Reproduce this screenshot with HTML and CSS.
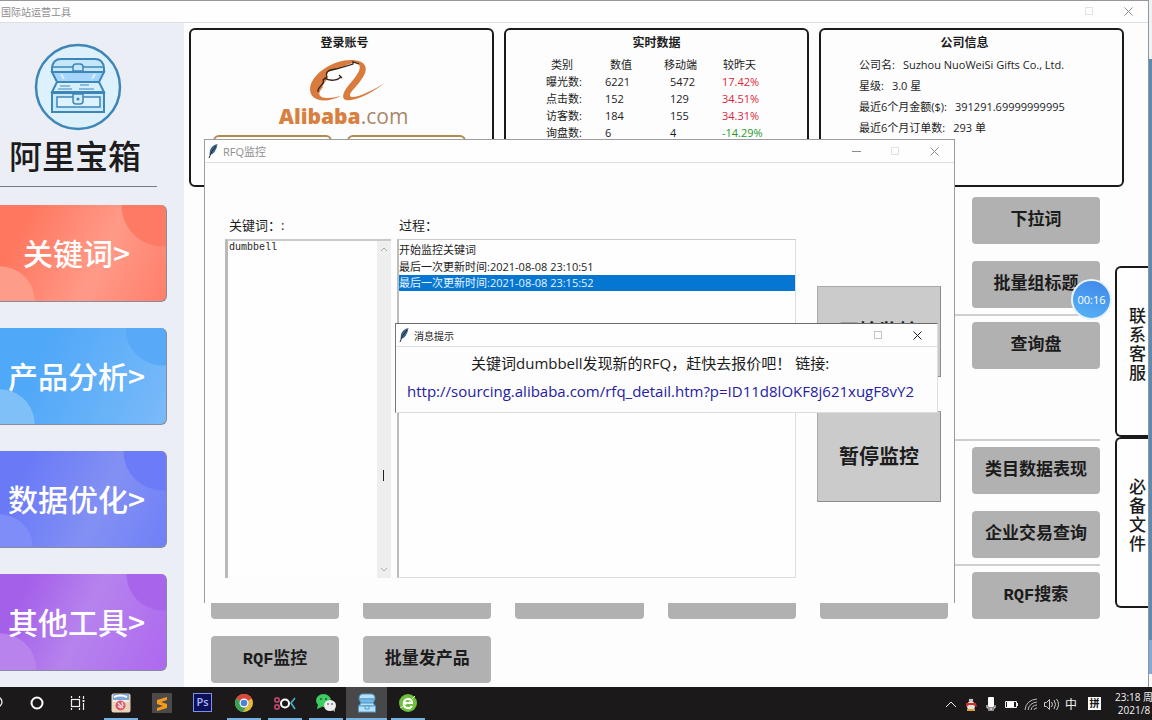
FILE: index.html
```html
<!DOCTYPE html>
<html lang="zh-CN">
<head>
<meta charset="utf-8">
<title>国际站运营工具</title>
<link rel="stylesheet" href="styles.css">
</head>
<body>
<div class="desktop">
  <div class="workspace">
    <main class="app">
      <header class="titlebar app-titlebar">
        <span class="titlebar-text">国际站运营工具</span>
        <span class="controls">
          <button class="ctl faint" aria-label="□"><svg width="9" height="9"><rect x=".5" y=".5" width="7" height="7"/></svg></button>
          <button class="ctl" aria-label="×"><svg width="9" height="9"><path d="M.5 .5l8 8M8.5 .5l-8 8"/></svg></button>
        </span>
      </header>
      <div class="app-body">
        <nav class="sidebar">
          <svg class="logo" width="88" height="88" viewBox="0 0 88 88" fill="none" stroke="#3f86b8" stroke-width="2">
            <circle cx="44" cy="44" r="42" fill="#ddf1fd" stroke-width="2.500"/>
            <path d="M18 25q1-9 9-9h34q8 0 9 9v4H18z" fill="#c4e7fb"/>
            <path d="M18 24h21M49 24h21" stroke-width="1.5"/>
            <path d="M18 29h52l-5 10H23z" fill="#a5d5fa"/>
            <path d="M27 31l3 5M61 31l-3 5" stroke="#d9effd"/>
            <path d="M23 39h42l5 10H18z" fill="#d5effc"/>
            <path d="M26 43h10M46 42h9M24 46h14M45 46h15" stroke-width="1"/>
            <rect x="18" y="50" width="52" height="19" fill="#c9eafb"/>
            <rect x="23" y="54" width="43" height="10" stroke-width="1.5" fill="#ddf3fd"/>
            <path d="M39 51h10v7q0 3-3 3h-4q-3 0-3-3z" fill="#d3edfb" stroke-width="1.5"/>
            <path d="M39 28v-4q0-3 3-3h4q3 0 3 3v4z" fill="#c4e7fb" stroke-width="1.5"/>
            <circle cx="44" cy="56" r="1.500" fill="#3f86b8" stroke="none"/>
          </svg>
          <h1 class="brand">阿里宝箱</h1>
          <div class="menu">
            <button class="menu-item coral">关键词&gt;</button>
            <button class="menu-item sky">产品分析&gt;</button>
            <button class="menu-item indigo">数据优化&gt;</button>
            <button class="menu-item violet">其他工具&gt;</button>
          </div>
        </nav>
        <div class="content">
          <div class="cards">
            <section class="card account">
              <h2>登录账号</h2>
              <svg class="swoosh" width="78" height="44" viewBox="0 0 78 44">
                <path d="M32 38C16 46 1 43 1 31 2 15 26 1 44 2c14 1 15 9 10 17-5 9-14 15-13 19 2 3 13 0 35-13C56 40 43 43 37 42c-5-1-3-8 2-14 8-9 14-17 11-21-4-6-14 2-31 7l-2 5 2 1-6 8 1 1C4 40 16 42 32 38z" fill="#d87b3c"/>
                <path d="M9 34c-1-6 8-7 5-12l4-3c-2-5 1-7 9-8l17-5v-2l6 2" fill="none" stroke="#33221a" stroke-width="1.3"/>
                <path d="M15 20c7 4 14 2 17-1M30 17l3 3" fill="none" stroke="#33221a" stroke-width="1.3"/>
              </svg>
              <div class="wordmark"><b>Alibaba</b><span>.com</span></div>
              <div class="account-slots"><div></div><div></div></div>
            </section>
            <section class="card">
              <h2>实时数据</h2>
              <table class="stats">
                <thead><tr><th>类别</th><th>数值</th><th>移动端</th><th>较昨天</th></tr></thead>
                <tbody>
                  <tr><td>曝光数:</td><td>6221</td><td class="shift">5472</td><td class="up">17.42%</td></tr>
                  <tr><td>点击数:</td><td>152</td><td class="shift">129</td><td class="up">34.51%</td></tr>
                  <tr><td>访客数:</td><td>184</td><td class="shift">155</td><td class="up">34.31%</td></tr>
                  <tr><td>询盘数:</td><td>6</td><td class="shift">4</td><td class="down">-14.29%</td></tr>
                </tbody>
              </table>
            </section>
            <section class="card company">
              <h2>公司信息</h2>
              <dl class="info">
                <div><dt>公司名:</dt><dd>Suzhou NuoWeiSi Gifts Co., Ltd.</dd></div>
                <div><dt>星级:</dt><dd>3.0 星</dd></div>
                <div><dt>最近6个月金额($):</dt><dd>391291.69999999995</dd></div>
                <div><dt>最近6个月订单数:</dt><dd>293 单</dd></div>
              </dl>
            </section>
          </div>
          <div class="lower">
            <div class="tools">
              <div class="tool-group">
                <button class="tool last">下拉词</button>
                <button class="tool last">批量组标题</button>
              </div>
              <div class="tool-group two-rows">
                <button class="tool last">查询盘</button>
              </div>
              <div class="tool-group">
                <button class="tool last">类目数据表现</button>
                <button class="tool last">企业交易查询</button>
              </div>
              <div class="tool-group">
                <div class="tool"></div><div class="tool"></div><div class="tool"></div><div class="tool"></div><div class="tool"></div>
                <button class="tool">RQF搜索</button>
                <button class="tool">RQF监控</button>
                <button class="tool">批量发产品</button>
              </div>
            </div>
            <div class="side-tabs">
              <button class="side-tab">联系客服</button>
              <button class="side-tab">必备文件</button>
            </div>
          </div>
        </div>
      </div>
    </main>
    <div class="backdrop"><div class="b-top"></div><div class="b-blue"></div><div class="b-pale"></div><div class="b-end"></div></div>

    <section class="window rfq">
      <header class="titlebar">
        <svg class="feather" width="11" height="14" viewBox="0 0 11 14"><path d="M9.500 0Q4 1 2 6l-.5 5Q8 10 9.500 0z" fill="#3f6488"/><path d="M1 14Q3 7 8 2" stroke="#1b2b3f" fill="none"/></svg>
        <span class="titlebar-text">RFQ监控</span>
        <span class="controls">
          <button class="ctl" aria-label="−"><svg width="9" height="9"><path d="M0 4.500h9"/></svg></button>
          <button class="ctl faint" aria-label="□"><svg width="9" height="9"><rect x=".5" y=".5" width="7" height="7"/></svg></button>
          <button class="ctl" aria-label="×"><svg width="9" height="9"><path d="M.5 .5l8 8M8.500 .5l-8 8"/></svg></button>
        </span>
      </header>
      <div class="rfq-body">
        <div class="pane keywords">
          <label class="pane-label" for="kw">关键词：:</label>
          <div class="kw-box">
            <textarea id="kw" spellcheck="false">dumbbell</textarea>
            <div class="scroll">
              <svg width="8" height="6"><path d="M1 5l3-3 3 3"/></svg>
              <svg width="8" height="6"><path d="M1 1l3 3 3-3"/></svg>
            </div>
            <svg class="caret" width="3" height="11"><path d="M1.500 0v11" stroke="#222"/></svg>
          </div>
        </div>
        <div class="pane process">
          <span class="pane-label" id="proc">过程：</span>
          <ul class="log" role="listbox" aria-labelledby="proc">
            <li role="option">开始监控关键词</li>
            <li role="option">最后一次更新时间:2021-08-08 23:10:51</li>
            <li role="option" aria-selected="true" class="selected">最后一次更新时间:2021-08-08 23:15:52</li>
          </ul>
        </div>
        <div class="actions">
          <button class="action">开始监控</button>
          <button class="action">暂停监控</button>
        </div>
      </div>
    </section>

    <section class="window notice">
      <header class="titlebar">
        <svg class="feather" width="11" height="14" viewBox="0 0 11 14"><path d="M9.500 0Q4 1 2 6l-.5 5Q8 10 9.500 0z" fill="#3f6488"/><path d="M1 14Q3 7 8 2" stroke="#1b2b3f" fill="none"/></svg>
        <span class="titlebar-text">消息提示</span>
        <span class="controls">
          <button class="ctl faint" aria-label="□"><svg width="9" height="9"><rect x=".5" y=".5" width="7" height="7"/></svg></button>
          <button class="ctl" aria-label="×"><svg width="9" height="9"><path d="M.5 .5l8 8M8.500 .5l-8 8"/></svg></button>
        </span>
      </header>
      <p>关键词dumbbell发现新的RFQ，赶快去报价吧！ 链接:</p>
      <a href="http://sourcing.alibaba.com/rfq_detail.htm?p=ID11d8lOKF8j621xugF8vY2">http://sourcing.alibaba.com/rfq_detail.htm?p=ID11d8lOKF8j621xugF8vY2</a>
    </section>

    <div class="timer">00:16</div>
  </div>

  <footer class="taskbar">
    <div class="apps">
      <div class="task"><svg width="20" height="20" fill="none" stroke="#eee" stroke-width="1.300"><circle cx="11" cy="9" r="5"/><path d="M8 13l-4 4"/></svg></div>
      <div class="task"><svg width="20" height="20" fill="none" stroke="#fff" stroke-width="2"><circle cx="10" cy="10" r="5.500"/></svg></div>
      <div class="task spaced"><svg width="20" height="20" fill="none" stroke="#eee" stroke-width="1.200"><rect x="3.500" y="6.500" width="8" height="7"/><path d="M3.500 3v2M11.500 3v2M3.500 15v2M11.500 15v2M15.500 3v3M15.500 10v7"/><path d="M14.500 8h2" stroke-width="2"/></svg></div>
      <div class="task open"><svg width="20" height="20"><rect width="19" height="19" x=".5" y=".5" rx="2" fill="#e9d3ba"/><path d="M2 1h16v6H2z" fill="#7ea8dc"/><path d="M3 4q6-3 13 0" stroke="#fff" stroke-width="2" fill="none"/><path d="M2 7h16v2H2z" fill="#f3ece7"/><circle cx="9.500" cy="12.500" r="5" fill="#d85a6e"/><path d="M7 10l5 5M11 9l1 4M7 13l3 2" stroke="#fbe3e3" stroke-width="1.300"/></svg></div>
      <div class="task"><svg width="20" height="20"><rect width="20" height="20" rx="1" fill="#4a4a4a"/><path d="M15 4L5 7v4l6 2-6 2v3l10-3v-4L9 9l6-2z" fill="#f79a1d"/></svg></div>
      <div class="task"><span class="ps">Ps</span></div>
      <div class="task open"><svg width="20" height="20"><circle cx="10" cy="10" r="9" fill="#e2ba3e"/><path d="M10 10L2.200 5.500A9 9 0 0 1 17.800 5.500z" fill="#d9483b"/><path d="M10 1a9 9 0 0 1 7.800 4.500H10z" fill="#d9483b"/><path d="M2.200 5.500A9 9 0 0 0 9 19l4-7-3-2z" fill="#3f9e56"/><circle cx="10" cy="10" r="4.500" fill="#fff"/><circle cx="10" cy="10" r="3.300" fill="#4a84d8"/></svg></div>
      <div class="task open"><svg width="24" height="20" fill="none" stroke-width="1.600"><rect x="2" y="5" width="4" height="4" rx="1" stroke="#cf4a72"/><rect x="2" y="12" width="4" height="4" rx="1" stroke="#cf4a72"/><circle cx="12" cy="10.500" r="4" stroke="#fff" stroke-width="2"/><path d="M22 5l-4 5 4 6" stroke="#4bb6c9"/></svg></div>
      <div class="task open"><svg width="22" height="20"><ellipse cx="8.500" cy="7.500" rx="7.500" ry="6.500" fill="#3ecb62"/><path d="M3 11l-1 5 5-2z" fill="#3ecb62"/><ellipse cx="15" cy="12.500" rx="6" ry="5.500" fill="#eee"/><path d="M17 16l3 3-1-5z" fill="#eee"/><g fill="#1b5c2d"><circle cx="6" cy="6" r="1"/><circle cx="11" cy="6" r="1"/></g><g fill="#777"><circle cx="13" cy="11" r="1"/><circle cx="17" cy="11" r="1"/></g></svg></div>
      <div class="task open active"><svg width="20" height="20" fill="#b9e0f7" stroke="#4e9ccb"><path d="M2 6q0-5 4-5h8q4 0 4 5z"/><path d="M2 6h16l-2 4H4z" fill="#78b8e2"/><path d="M4 10h12l2 3H2z"/><rect x="1.500" y="13" width="17" height="6"/><path d="M8 13h4v3H8z"/></svg></div>
      <div class="task open"><svg width="20" height="20"><circle cx="10" cy="10" r="9" fill="#6dbf3c"/><path d="M14 13q-2 3-5 2-4-1-3-6 1-3 4-3 4 0 4 4H7" fill="none" stroke="#fff" stroke-width="2.200"/><path d="M2 15Q9 12 17 3" fill="none" stroke="#d6efb8"/></svg></div>
    </div>
    <div class="tray">
      <svg width="20" height="16" fill="none" stroke="#eee"><path d="M5 11l5-5 5 5"/></svg>
      <svg width="20" height="16"><ellipse cx="10" cy="5" rx="3" ry="4" fill="#2a2020"/><ellipse cx="10" cy="10" rx="4" ry="5" fill="#e9e2dc"/><path d="M5 7h10l1 4-4-2H8l-3 2z" fill="#cf2f2f"/><path d="M6 14h8" stroke="#dba23a" stroke-width="2"/><circle cx="9" cy="4" r="1" fill="#fff"/><circle cx="11" cy="4" r="1" fill="#fff"/></svg>
      <svg width="20" height="16"><rect x="7" y="1" width="6" height="10" rx="1" fill="#fff"/><path d="M6 9v3h8V9M10 12v2M7 14h6" stroke="#fff" fill="none"/></svg>
      <svg width="20" height="16"><path d="M4.500 5.500h11v6h-11z" stroke="#eee" fill="none"/><path d="M6 6h7v5H6z" fill="#fff"/><path d="M16.500 7v3" stroke="#eee"/></svg>
      <svg width="20" height="16" fill="none" stroke="#bbb"><path d="M4 14Q5 4 16 3M7 14Q8 7 16 6M10 14q1-5 6-5M13 14q0-2 3-2"/></svg>
      <svg width="20" height="16" fill="none" stroke="#ccc"><path d="M3.500 6.500h2l3-3v10l-3-3h-2zM10.500 6q2 2 0 5M13 4q3 4 0 9M15.500 3q4 5 0 11"/></svg>
      <span class="ime">中</span>
      <span class="pin">拼</span>
      <div class="clock"><span>23:18 周</span><span>2021/8</span></div>
    </div>
  </footer>
</div>
</body>
</html>
```
FILE: styles.css
```css
* { box-sizing: border-box; }

body {
  margin: 0;
  font-family: "Open Sans", "Noto Sans CJK SC", sans-serif;
  font-size: 11px;
  color: #1c1c1c;
}

button, textarea { font: inherit; color: inherit; border: 0; padding: 0; margin: 0; }
h1, h2, p, ul, dl, dd { margin: 0; padding: 0; }

.desktop { height: 100vh; display: flex; flex-direction: column; overflow: hidden; }
.workspace { position: relative; flex: 1; min-height: 0; display: flex; overflow: hidden; }
.app { flex: 1; min-width: 0; display: flex; flex-direction: column; background: #fdfdfd; }

/* Title bars */
.titlebar {
  display: flex;
  align-items: center;
  height: 23px;
  flex: none;
  background: #fefefe;
  border-bottom: 1px solid #dcdfe3;
  color: #8d8d8d;
}
.app-titlebar { border-top: 1px solid #98969a; padding-left: 1px; font-size: 10px; }
.controls { margin-left: auto; display: flex; }
.ctl { width: 39px; height: 20px; display: grid; place-items: center; background: none; }
.ctl svg { fill: none; stroke: #8b8b8b; }
.ctl.faint svg { stroke: #e2e2e2; }
.feather { margin: 0 4px 0 3px; }

.app-body { flex: 1; display: flex; min-height: 0; }

/* Sidebar */
.sidebar { width: 184px; flex: none; background: #ebeef5; padding-top: 20px; }
.logo { display: block; margin-left: 34px; }
.brand {
  width: 157px;
  padding: 6px 0 10px 9px;
  border-bottom: 1px solid #777b84;
  font-size: 33px;
  line-height: 39px;
  font-weight: 500;
  white-space: nowrap;
}
.menu { display: grid; gap: 26px; padding-top: 18px; }
.menu-item {
  position: relative;
  overflow: hidden;
  width: 167px;
  height: 97px;
  padding: 0 13px 3px 0;
  border-right: 1px solid #858ba0;
  border-bottom: 1px solid #858ba0;
  border-radius: 0 6px 6px 0;
  color: #fff;
  font-family: "Noto Sans CJK SC", sans-serif;
  font-size: 30px;
  line-height: 40px;
  font-weight: 500;
  white-space: nowrap;
}
.coral  { background: radial-gradient(circle at 163px 0, #fd7a64 41px, transparent 42px), radial-gradient(circle at 0 96px, #fe9c8a 34px, transparent 35px), linear-gradient(115deg, #ff775f 15%, #ff9a88 60%, #fe7f6a); }
.sky    { background: radial-gradient(circle at 163px 0, #58a9f8 37px, transparent 38px), radial-gradient(circle at 0 96px, #7fc0f9 34px, transparent 35px), linear-gradient(115deg, #50a8f8 25%, #7abaf9); }
.indigo { background: radial-gradient(circle at 163px 0, #6c7cf8 39px, transparent 40px), radial-gradient(circle at 0 96px, #7e8df8 32px, transparent 33px), linear-gradient(115deg, #6a7af7 15%, #8390f3 60%, #6f80f7); }
.violet { background: radial-gradient(circle at 163px 0, #a865ec 36px, transparent 37px), radial-gradient(circle at 0 96px, #b983ee 36px, transparent 37px), linear-gradient(115deg, #a560ea 15%, #b683ed 50%, #ae68ef); }

/* Cards */
.content { flex: 1; min-width: 0; display: flex; flex-direction: column; }
.cards { display: grid; grid-template-columns: repeat(3, 1fr); gap: 10px; padding: 5px 24px 0 5px; }
.card { height: 159px; border: 2px solid #1a1a1a; border-radius: 6px; overflow: hidden; line-height: 17px; }
.card h2 { margin-top: 4px; font-size: 12px; line-height: 18px; font-weight: 700; text-align: center; }
.account { display: flex; flex-direction: column; align-items: center; }
.account h2 { padding-left: 6px; }
.swoosh { margin: 6px 0 2px 12px; }
.wordmark { padding-left: 4px; font-family: "Open Sans", sans-serif; font-size: 21px; line-height: 24px; color: #d8803f; }
.wordmark b { font-weight: 800; }
.wordmark span { color: #a98769; }
.account-slots { align-self: stretch; display: grid; grid-template-columns: 1fr 1fr; gap: 15px; padding: 7px 26px 0 22px; }
.account-slots div { height: 30px; border: 2px solid #b08a4e; border-radius: 6px; }

.stats { margin: 4px 0 0 40px; border-collapse: collapse; line-height: 17px; }
.stats th, .stats td { padding: 0; font-weight: 400; text-align: left; white-space: nowrap; }
.stats th { padding-left: 5px; }
.stats th:last-child { padding-left: 1px; }
.stats th:first-child, .stats td:first-child { width: 59px; }
.stats th:nth-child(2) { width: 54px; }
.stats th:nth-child(3) { width: 63px; }
.stats .shift { padding-left: 11px; }
.stats .up { color: #df2539; }
.stats .down { color: #259a2e; }

.company h2 { padding-right: 14px; }
.info { padding: 2px 0 0 38px; line-height: 21px; }
.info div { display: flex; gap: 8px; white-space: nowrap; }

/* Tool grid */
.lower { flex: 1; display: flex; }
.tools { flex: 1; padding: 10px 15px 0 27px; }
.tool-group { display: grid; grid-template-columns: repeat(6, 1fr); grid-auto-rows: 47px; gap: 17px 24px; }
.tool-group + .tool-group { margin-top: 6px; padding-top: 6px; border-top: 2px solid #cfcfcf; }
.two-rows { grid-template-rows: 47px 47px; }
.tool {
  background: #b1b1b1;
  border-radius: 4px;
  font-family: "Liberation Mono", "Noto Sans CJK SC", monospace;
  font-size: 17px;
  font-weight: 600;
  line-height: 24px;
  white-space: nowrap;
}
.last { grid-column: 6; }
.side-tabs { width: 33px; flex: none; padding-top: 79px; }
.side-tab {
  display: block;
  width: 33px;
  height: 171px;
  padding: 0 5px 15px 12px;
  background: #fefefe;
  border: 2px solid #1a1a1a;
  border-right: 0;
  border-radius: 6px 0 0 6px;
  font-size: 17px;
  line-height: 19px;
  font-weight: 500;
  word-break: break-all;
}

.backdrop { width: 4px; flex: none; display: flex; flex-direction: column; border-left: 1px solid #8c98a4; }
.b-top { flex: 0 0 59px; background: #f1f1f1; }
.b-blue { flex: 1; background: #6188ae; }
.b-pale { flex: 0 0 34px; background: #86a8d4; }
.b-end { flex: 0 0 13px; background: #fafafa; }

/* Floating windows */
.window { position: absolute; background: #fdfdfd; border: 1px solid #9b9da0; }
.rfq { left: 204px; top: 139px; width: 751px; border-bottom: 0; }
.rfq-body { display: flex; padding: 53px 13px 25px 20px; }
.pane { display: flex; flex-direction: column; }
.pane-label { padding-left: 4px; font-size: 13px; line-height: 18px; margin-bottom: 5px; }
.keywords { width: 166px; }
.kw-box { position: relative; display: flex; height: 339px; border-top: 2px solid #c9c9c9; border-left: 3px solid #b9b9b9; }
.kw-box textarea {
  flex: 1;
  min-width: 0;
  resize: none;
  background: #fefefe;
  font-family: "Liberation Mono", monospace;
  font-size: 10px;
  line-height: 14px;
  padding-left: 1px;
}
.scroll { width: 14px; display: flex; flex-direction: column; justify-content: space-between; align-items: center; padding: 5px 0; background: #eee; }
.scroll svg { fill: none; stroke: #aaa; }
.caret { position: absolute; right: 6px; top: 229px; }
.process { width: 399px; margin-left: 6px; }
.process .pane-label { padding-left: 2px; }
.log { height: 339px; padding-top: 1px; list-style: none; background: #fefefe; border: 1px solid #dedede; border-left: 2px solid #bdbdbd; border-top-color: #c9c9c9; line-height: 17px; }
.log .selected { background: #0577d2; color: #e8f4ff; line-height: 16px; }
.actions { width: 124px; margin: 70px 0 0 21px; display: flex; flex-direction: column; gap: 34px; }
.action { height: 91px; padding-bottom: 2px; background: #cbcbcb; border: 1px solid #8c8c8c; border-top-color: #aaa; border-left-color: #aaa; font-size: 20px; font-weight: 700; }

.notice { left: 395px; top: 323px; width: 543px; height: 90px; border-color: #6a6a6a #ddd #ddd #777; white-space: nowrap; }
.notice .titlebar { color: #1c1c1c; font-size: 10px; }
.notice .ctl:not(.faint) svg { stroke: #1c1c1c; }
.notice .ctl.faint svg { stroke: #c4c4c4; }
.notice p { padding: 5px 0 3px 75px; font-size: 15px; line-height: 22px; }
.notice a { display: block; padding-left: 11px; font-size: 15px; line-height: 28px; color: #2420a4; text-decoration: none; }

.timer {
  position: absolute;
  left: 1071px;
  top: 279px;
  width: 41px;
  height: 41px;
  border: 2px solid #e9f3fb;
  border-radius: 50%;
  background: linear-gradient(200deg, #3f86ea, #57b4f6);
  color: #fff;
  line-height: 37px;
  text-align: center;
}

/* Taskbar */
.taskbar { height: 33px; flex: none; display: flex; overflow: hidden; background: #1c191b; color: #f2f2f2; }
.apps { display: flex; margin-left: -25px; }
.task { width: 41px; display: grid; place-items: center; border-bottom: 2px solid transparent; background-clip: padding-box; }
.task.spaced { margin-right: 2px; }
.task.open { background: linear-gradient(#76b3e2, #76b3e2) center bottom / 34px 2px no-repeat border-box; }
.task.active { background: linear-gradient(#76b3e2, #76b3e2) center bottom / 41px 2px no-repeat border-box, #48474a; }
.ps { width: 19px; height: 19px; border: 1px solid #7d93e8; background: #0e0f5a; color: #a9b8fb; font-weight: 600; line-height: 16px; text-align: center; }
.tray { margin-left: auto; display: flex; align-items: center; white-space: nowrap; }
.ime { width: 20px; text-align: center; font-size: 12px; }
.pin { width: 13px; height: 13px; margin: 0 15px 0 7px; background: #fff; color: #111; font-size: 10px; line-height: 12px; text-align: center; font-weight: 700; }
.clock { width: 36px; display: flex; flex-direction: column; align-items: center; line-height: 13px; font-size: 10px; }
```
